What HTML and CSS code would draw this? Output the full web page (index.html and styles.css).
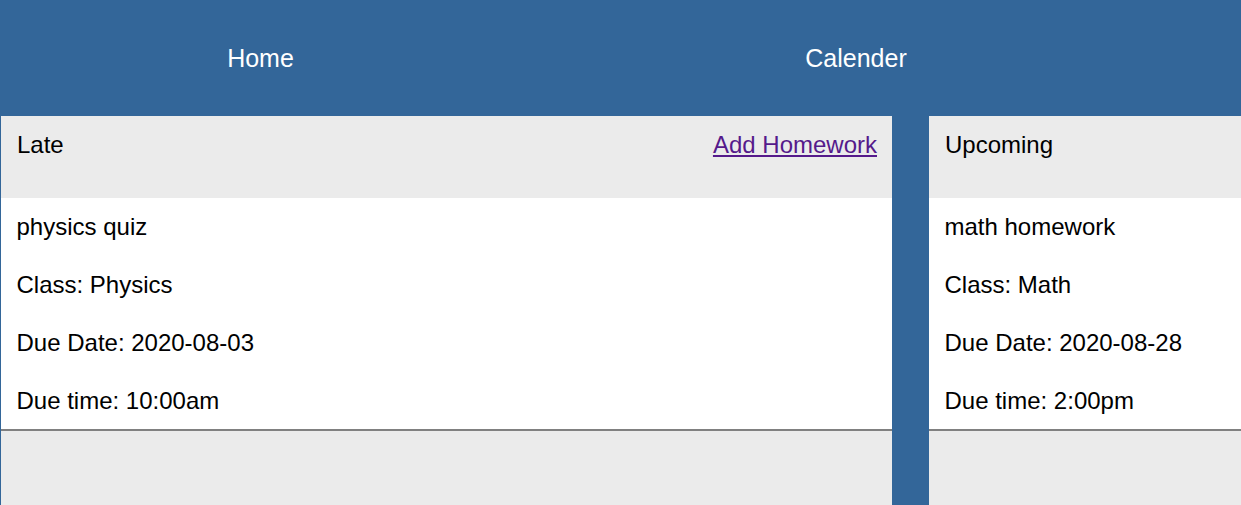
FILE: index.html
```html
<!DOCTYPE html>
<html>
<head>
<meta charset="utf-8">
<title>Homework</title>
<link rel="stylesheet" href="styles.css">
</head>
<body>
<nav class="nav">
  <a class="nav-item" href="#">Home</a>
  <a class="nav-item" href="#">Calender</a>
</nav>
<main class="board">
  <section class="card card-left">
    <header class="card-head">
      <span>Late</span>
      <a class="add-link" href="#">Add Homework</a>
    </header>
    <div class="card-body">
      <p>physics quiz</p>
      <p>Class: Physics</p>
      <p>Due Date: 2020-08-03</p>
      <p>Due time: 10:00am</p>
    </div>
  </section>
  <section class="card card-right">
    <header class="card-head">
      <span>Upcoming</span>
    </header>
    <div class="card-body">
      <p>math homework</p>
      <p>Class: Math</p>
      <p>Due Date: 2020-08-28</p>
      <p>Due time: 2:00pm</p>
    </div>
  </section>
</main>
</body>
</html>
```
FILE: styles.css
```css
html, body {
  margin: 0;
  padding: 0;
  height: 100%;
  overflow: hidden;
}
body {
  background: #336699;
  font-family: "Liberation Sans", Arial, sans-serif;
  color: #000;
}
.nav {
  height: 116px;
  display: grid;
  grid-template-columns: 521px 670px;
  align-items: center;
}
.nav-item {
  color: #fff;
  text-decoration: none;
  font-size: 25px;
  text-align: center;
}
.board {
  display: flex;
  gap: 37px;
  padding-left: 1px;
  height: calc(100% - 116px);
}
.card {
  flex: 0 0 891px;
  background: #ebebeb;
}
.card-head {
  height: 82px;
  box-sizing: border-box;
  padding: 15px 15px 0 16px;
  display: flex;
  justify-content: space-between;
  align-items: flex-start;
  font-size: 24px;
  line-height: 28px;
}
.add-link {
  color: #551a8b;
  text-decoration: underline;
}
.card-body {
  background: #fff;
  padding: 15px 16px 14px 15.5px;
  border-bottom: 2px solid #808080;
  display: flex;
  flex-direction: column;
  gap: 30px;
  font-size: 24px;
  line-height: 28px;
}
.card-body p {
  margin: 0;
}
```
